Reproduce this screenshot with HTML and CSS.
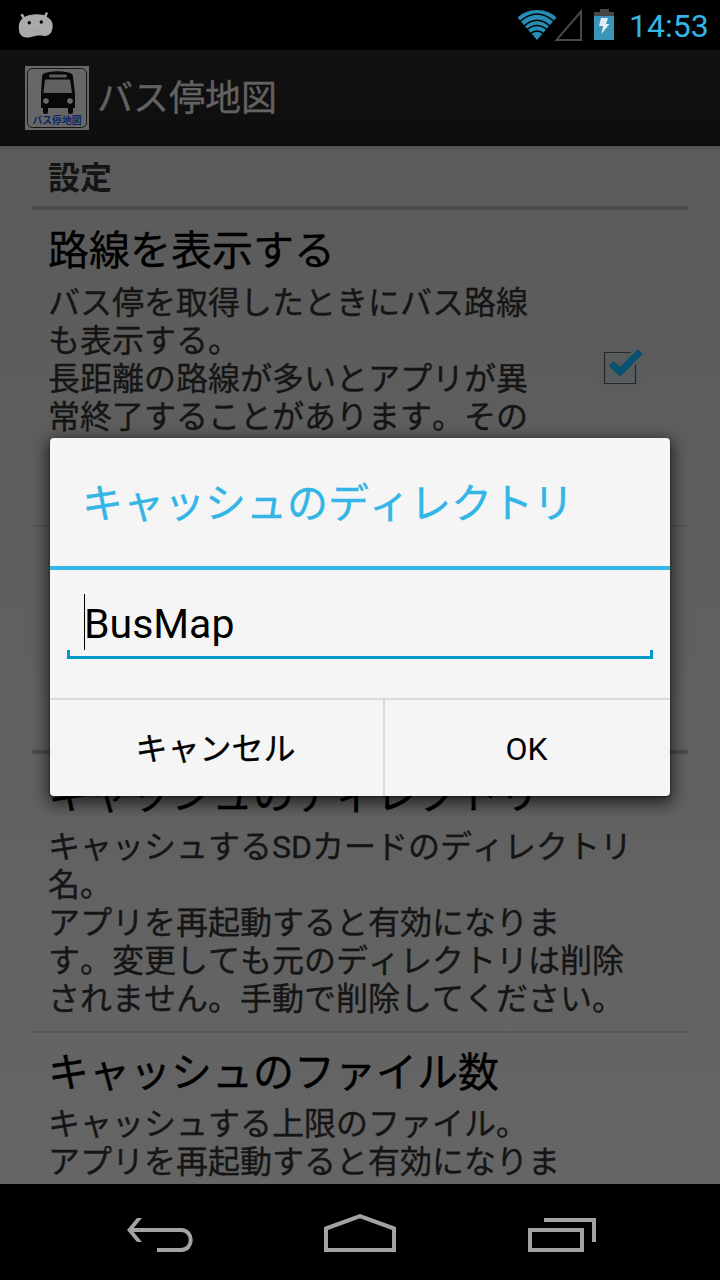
FILE: index.html
```html
<!DOCTYPE html>
<html lang="ja">
<head>
<meta charset="utf-8">
<title>バス停地図</title>
<link rel="stylesheet" href="styles.css">
</head>
<body>
<div class="screen">
  <header class="status">
    <svg class="debug" width="36" height="28" viewBox="0 0 36 28">
      <path d="M4 4l3 5M28.500 2.500l-2.500 6" stroke="#aaa" stroke-width="2.600" stroke-linecap="round"/>
      <path d="M7 6C11 3 25 2 29 6C34 8 36 14 34 19C33 23 30 25 26 25C21 24 17 25 13 26C7 28 1 25 1 19C0 13 2 8 7 6Z" fill="#aaa"/>
      <circle cx="11.300" cy="11.800" r="1.700"/><circle cx="23.300" cy="11" r="1.700"/>
      <path d="M15 17v5M19 20h1" stroke="#888" stroke-width=".6" stroke-dasharray="1 1.500"/>
    </svg>
    <div class="indicators">
      <svg width="100" height="34" viewBox="0 0 100 34">
        <path d="M20 32L.5 9.500Q8 2 20 2T39.500 9.500Z" fill="#288db5"/>
        <g fill="none" stroke="#000" stroke-width="1.500">
          <path d="M3 13.500Q20 -1.500 37 13.500M6.500 18.500Q20 6 33.500 18.500M9.500 22Q20 13 30.500 22M13 26Q20 20 27 26"/>
        </g>
        <path d="M39.500 31.900H64V3.500Z" fill="none" stroke="#4a4a4a" stroke-width="2"/>
        <path d="M83 4V1h9v3h5v4H77V4Z" fill="#464646"/>
        <path d="M77 8h20v24H77Z" fill="#3b94b9"/>
        <path d="M84 10h7l-2 6h3.500L84.500 26l1.500-8h-4Z" fill="#e0eef3"/>
      </svg>
      <span class="clock">14:53</span>
    </div>
  </header>

  <div class="actionbar">
    <svg class="appicon" width="64" height="64" viewBox="0 0 64 64">
      <path d="M0 0h64v64H0Z" fill="#676767"/>
      <rect x="2.500" y="2.500" width="59" height="59" rx="5" fill="none" stroke="#161616"/>
      <path d="M17 11Q17 7 22 6.500Q33 4 43 6.500Q48 7 48 11L50 28V42H48V46Q48 48 46 48H45Q43 48 43 46V42H23V46Q23 48 21 48H20Q18 48 18 46V42H16V28Z" fill="#080808"/>
      <rect x="24" y="8.500" width="18" height="3" rx="1.500" fill="#5e5e5e"/>
      <path d="M20 13.500H45L47 27H18.500Z" fill="#616161"/>
      <circle cx="21" cy="35" r="2.800" fill="#6c6c6c"/><circle cx="45" cy="35" r="2.800" fill="#6c6c6c"/>
      <text x="7.500" y="58.200" textLength="49" class="iconlabel">バス停地図</text>
    </svg>
    <h1 class="apptitle">バス停地図</h1>
  </div>

  <main class="list">
    <h2 class="category">設定</h2>
    <section class="pref tall">
      <div class="preftext">
        <h3>路線を表示する</h3>
        <p>バス停を取得したときにバス路線<br>も表示する。<br>長距離の路線が多いとアプリが異<br>常終了することがあります。その</p>
      </div>
      <svg class="check" width="50" height="46" viewBox="0 0 50 46">
        <path d="M36 10.500H9.500V41.500H40.500V23" fill="none" stroke="#272727" stroke-width="1.200"/>
        <path d="M14.500 24L18.500 20L25 25.500L43 8L47 12L25 34Z" fill="#035476" stroke="#164354" stroke-width=".8"/>
      </svg>
    </section>
    <section class="pref covered"></section>
    <section class="pref">
      <div class="preftext">
        <h3>キャッシュのディレクトリ</h3>
        <p>キャッシュするSDカードのディレクトリ<br>名。<br>アプリを再起動すると有効になりま<br>す。変更しても元のディレクトリは削除<br>されません。手動で削除してください。</p>
      </div>
    </section>
    <section class="pref last">
      <div class="preftext">
        <h3>キャッシュのファイル数</h3>
        <p>キャッシュする上限のファイル。<br>アプリを再起動すると有効になりま</p>
      </div>
    </section>
  </main>

  <nav class="navbar">
    <svg width="720" height="96" viewBox="0 0 720 96" fill="none" stroke="#a3a3a3" stroke-width="4">
      <path d="M130 46H181C194 46 194 66 181 66H157"/>
      <path d="M127 46L137 34H142L132 46L142 58H137Z" fill="#a3a3a3" stroke="none"/>
      <path d="M326 66V44.500L360 32.200L394 44.500V66Z"/>
      <path d="M530 46H582V66H530ZM544 36H594V58"/>
    </svg>
  </nav>

  <div class="dialog">
    <h2 class="dialogtitle">キャッシュのディレクトリ</h2>
    <div class="dialogbody">
      <div class="field"><span class="caret"></span><span>BusMap</span></div>
    </div>
    <div class="buttons">
      <div class="button cancel">キャンセル</div>
      <div class="button ok">OK</div>
    </div>
  </div>
</div>
</body>
</html>
```
FILE: styles.css
```css
* { box-sizing: border-box; }
body {
  margin: 0;
  background: #000;
  font-family: Roboto, "Noto Sans CJK JP", sans-serif;
  font-kerning: none;
}
h1, h2, h3, p { margin: 0; font-weight: 400; }
h1, h3, p, .dialogtitle, .cancel { -webkit-text-stroke: .35px currentColor; }
svg { display: block; flex: none; }
.screen {
  position: relative;
  width: 720px;
  height: 1280px;
  display: flex;
  flex-direction: column;
  overflow: hidden;
}
.status {
  height: 50px;
  flex: none;
  display: flex;
  justify-content: space-between;
  padding: 11px 12px 0 18px;
}
.indicators { display: flex; margin-top: -3px; gap: 12px; }
.clock {
  width: 79px;
  color: #33b5e5;
  font-size: 32px;
  line-height: 36px;
  white-space: nowrap;
}
.actionbar {
  height: 96px;
  flex: none;
  display: flex;
  align-items: center;
  gap: 8px;
  padding-left: 25px;
  background: linear-gradient(#111, #0e0e0e 93px, #050505);
}
.iconlabel {
  font: 700 9.8px "Noto Sans CJK JP", sans-serif;
  fill: #0b2864;
}
.apptitle { padding-top: 2px; color: #626262; font-size: 36px; line-height: 60px; }
.list {
  height: 1038px;
  flex: none;
  overflow: hidden;
  padding: 0 32px;
  background: linear-gradient(#525252, #5b5b5b 6px, #5e5e5e 30%, #656565);
}
.category {
  height: 64px;
  padding-left: 16px;
  border-bottom: 4px solid #4a4a4a;
  color: #151515;
  font-size: 32px;
  font-weight: 700;
  line-height: 64px;
}
.pref {
  display: flex;
  justify-content: space-between;
  padding: 16px 0 13px 16px;
  border-bottom: 2px solid #555;
}
.tall { height: 317px; }
.covered { height: 227px; border-bottom: 4px solid #4b4b4b; }
.last { padding-top: 15px; }
.last h3 { margin-bottom: 7px; }
.preftext { white-space: nowrap; }
.pref h3 {
  margin-bottom: 8px;
  color: #000;
  font-size: 41px;
  line-height: 50px;
}
.pref .preftext p { color: #151515; font-size: 32px; line-height: 38px; }
.last.pref h3 { margin-bottom: 7px; }
.check {
  margin: 116px 43px 0 0;
  filter: drop-shadow(0 0 3px rgba(0, 85, 120, .35));
}
.navbar { height: 96px; flex: none; }
.dialog {
  position: absolute;
  left: 50px;
  top: 438px;
  width: 620px;
  height: 358px;
  display: flex;
  flex-direction: column;
  border-radius: 4px;
  background: #f5f5f5;
  box-shadow: 0 5px 16px 3px rgba(0, 0, 0, .6), 0 1px 3px rgba(0, 0, 0, .5);
}
.dialogtitle {
  height: 132px;
  padding-left: 32px;
  border-bottom: 4px solid #33b5e5;
  color: #33b5e5;
  font-size: 41px;
  line-height: 132px;
}
.dialogbody { height: 128px; padding: 22px 17px 0; }
.field {
  height: 67px;
  display: flex;
  padding-left: 17px;
  font-size: 41px;
  line-height: 65px;
  color: #000;
  background:
    linear-gradient(#0099cc, #0099cc) 0 100% / 100% 3px no-repeat,
    linear-gradient(#0099cc, #0099cc) 0 100% / 3px 9px no-repeat,
    linear-gradient(#0099cc, #0099cc) 100% 100% / 3px 9px no-repeat;
}
.caret { width: 1px; height: 56px; margin: 2px -1px 0 0; background: #000; }
.buttons {
  height: 98px;
  display: flex;
  border-top: 2px solid #dadada;
}
.button {
  flex: 1;
  text-align: center;
  color: #000;
  font-size: 32px;
  line-height: 98px;
}
.cancel { flex: 0 0 335px; padding-right: 2px; border-right: 2px solid #dadada; }
.ok { padding-right: 2px; }
```
